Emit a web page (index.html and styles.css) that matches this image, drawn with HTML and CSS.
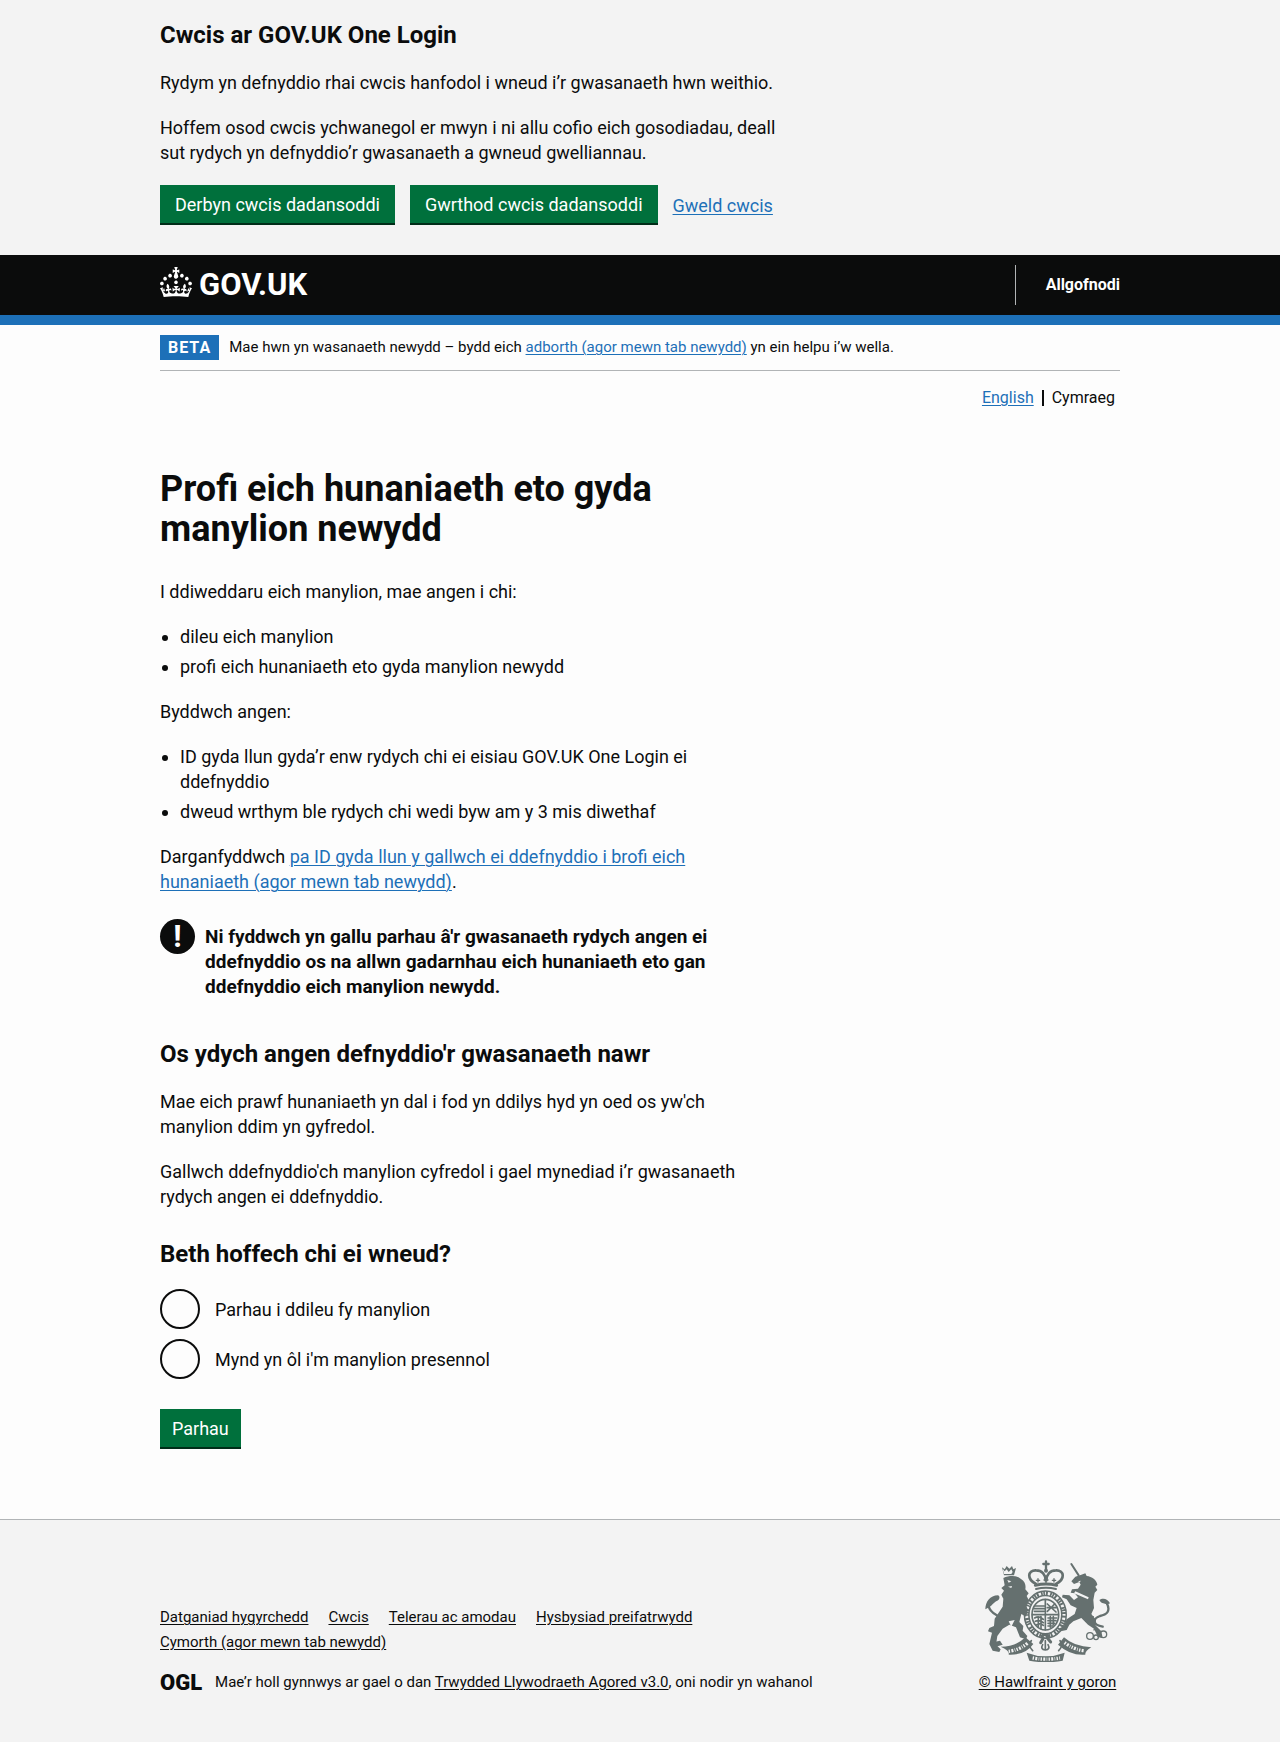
FILE: index.html
```html
<!DOCTYPE html>
<html lang="cy">
<head>
<meta charset="utf-8">
<meta name="viewport" content="width=device-width, initial-scale=1">
<title>Profi eich hunaniaeth eto gyda manylion newydd – GOV.UK One Login</title>
<link rel="stylesheet" href="styles.css">
</head>
<body>
<section class="cookies" aria-label="Cwcis ar GOV.UK One Login">
  <div class="container">
    <div class="cookies-message">
      <h2 class="heading-m">Cwcis ar GOV.UK One Login</h2>
      <p>Rydym yn defnyddio rhai cwcis hanfodol i wneud i’r gwasanaeth hwn weithio.</p>
      <p>Hoffem osod cwcis ychwanegol er mwyn i ni allu cofio eich gosodiadau, deall sut rydych yn defnyddio’r gwasanaeth a gwneud gwelliannau.</p>
    </div>
    <div class="button-group">
      <button type="button" class="button">Derbyn cwcis dadansoddi</button>
      <button type="button" class="button">Gwrthod cwcis dadansoddi</button>
      <a class="link" href="#cwcis">Gweld cwcis</a>
    </div>
  </div>
</section>

<header class="header">
  <div class="container header-inner">
    <a class="logo" href="#gov">
      <svg class="logo-crown" viewBox="0 0 32 30" aria-hidden="true"><path fill="currentColor" d="M22.6 10.4c-1 .4-2-.1-2.4-1-.4-.9.1-2 1-2.4.9-.4 2 .1 2.4 1s-.1 2-1 2.4m-5.9 6.7c-.9.4-2-.1-2.4-1-.4-.9.1-2 1-2.4.9-.4 2 .1 2.4 1s-.1 2-1 2.4m10.8-3.7c-1 .4-2-.1-2.4-1-.4-.9.1-2 1-2.4.9-.4 2 .1 2.4 1s0 2-1 2.4m3.3 4.8c-1 .4-2-.1-2.4-1-.4-.9.1-2 1-2.4.9-.4 2 .1 2.4 1s-.1 2-1 2.4M17 4.7l2.3 1.2V2.5l-2.3.7-.2-.2.9-3h-3.4l.9 3-.2.2c-.1.1-2.3-.7-2.3-.7v3.4L15 4.7c.1.1.1.2.2.2l-1.3 4c-.1.2-.1.4-.1.6 0 1.1.8 2 1.9 2.2h.7c1-.2 1.9-1.1 1.9-2.1 0-.2 0-.4-.1-.6l-1.3-4c-.1-.2 0-.2.1-.3m-7.6 5.7c.9.4 2-.1 2.4-1 .4-.9-.1-2-1-2.4-.9-.4-2 .1-2.4 1s0 2 1 2.4m-5 3c.9.4 2-.1 2.4-1 .4-.9-.1-2-1-2.4-.9-.4-2 .1-2.4 1s.1 2 1 2.4m-3.2 4.8c.9.4 2-.1 2.4-1 .4-.9-.1-2-1-2.4-.9-.4-2 .1-2.4 1s0 2 1 2.4m14.8 11c4.4 0 8.6.3 12.3.8 1.1-4.5 2.4-7 3.7-8.8l-2.5-.9c.2 1.3.3 1.9 0 2.7-.4-.4-.8-1.1-1.1-2.3l-1.2 4c.7-.5 1.3-.8 2-.9-1.1 2.5-2.6 3.1-3.5 3-1.1-.2-1.7-1.2-1.5-2.1.3-1.2 1.5-1.5 2.1-.1 1.1-2.3-.8-3-2-2.3 1.9-1.9 2.1-3.5.6-5.6-2.1 1.6-2.1 3.2-1.2 5.5-1.2-1.4-3.2-.6-2.5 1.6.9-1.4 2.1-.5 1.9.8-.2 1.1-1.7 2.1-3.5 1.9-2.7-.2-2.9-2.1-2.9-3.6.7-.1 1.9.5 2.9 1.9l.4-4.3c-1.1 1.1-2.1 1.4-3.2 1.4.4-1.2 2.1-3 2.1-3h-5.4s1.7 1.9 2.1 3c-1.1 0-2.1-.2-3.2-1.4l.4 4.3c1-1.4 2.2-2 2.9-1.9-.1 1.5-.2 3.4-2.9 3.6-1.9.2-3.4-.8-3.5-1.9-.2-1.3 1-2.2 1.9-.8.7-2.3-1.2-3-2.5-1.6.9-2.2.9-3.9-1.2-5.5-1.5 2-1.3 3.7.6 5.6-1.2-.7-3.1 0-2 2.3.6-1.4 1.8-1.1 2.1.1.2.9-.3 1.9-1.5 2.1-.9.2-2.4-.5-3.5-3 .6 0 1.2.3 2 .9l-1.2-4c-.3 1.1-.7 1.9-1.1 2.3-.3-.8-.2-1.4 0-2.7l-2.9.9C1.3 23 2.6 25.5 3.7 30c3.7-.5 7.9-.8 12.3-.8"/></svg>
      <span>GOV.UK</span>
    </a>
    <nav class="header-nav" aria-label="Cyfrif"><a href="#allgofnodi">Allgofnodi</a></nav>
  </div>
</header>

<div class="page">
  <div class="container">
    <div class="phase-banner">
      <strong class="tag">BETA</strong>
      <span>Mae hwn yn wasanaeth newydd – bydd eich <a class="link" href="#adborth">adborth (agor mewn tab newydd)</a> yn ein helpu i’w wella.</span>
    </div>
    <nav class="languages" aria-label="Dewis iaith">
      <a class="link" href="#en">English</a>
      <span class="language-current">Cymraeg</span>
    </nav>

    <main class="content">
      <h1>Profi eich hunaniaeth eto gyda manylion newydd</h1>
      <p>I ddiweddaru eich manylion, mae angen i chi:</p>
      <ul class="bullets">
        <li>dileu eich manylion</li>
        <li>profi eich hunaniaeth eto gyda manylion newydd</li>
      </ul>
      <p>Byddwch angen:</p>
      <ul class="bullets">
        <li>ID gyda llun gyda’r enw rydych chi ei eisiau GOV.UK One Login ei ddefnyddio</li>
        <li>dweud wrthym ble rydych chi wedi byw am y 3 mis diwethaf</li>
      </ul>
      <p>Darganfyddwch <a class="link" href="#id">pa ID gyda llun y gallwch ei ddefnyddio i brofi eich hunaniaeth (agor mewn tab newydd)</a>.</p>
      <div class="warning">
        <span class="warning-icon" aria-hidden="true">!</span>
        <strong>Ni fyddwch yn gallu parhau â'r gwasanaeth rydych angen ei ddefnyddio os na allwn gadarnhau eich hunaniaeth eto gan ddefnyddio eich manylion newydd.</strong>
      </div>
      <h2 class="heading-m">Os ydych angen defnyddio'r gwasanaeth nawr</h2>
      <p>Mae eich prawf hunaniaeth yn dal i fod yn ddilys hyd yn oed os yw'ch manylion ddim yn gyfredol.</p>
      <p>Gallwch ddefnyddio'ch manylion cyfredol i gael mynediad i’r gwasanaeth rydych angen ei ddefnyddio.</p>
      <form action="#">
        <fieldset>
          <legend class="heading-m">Beth hoffech chi ei wneud?</legend>
          <div class="radio">
            <input type="radio" name="dewis" id="dileu" value="dileu">
            <label for="dileu">Parhau i ddileu fy manylion</label>
          </div>
          <div class="radio">
            <input type="radio" name="dewis" id="presennol" value="presennol">
            <label for="presennol">Mynd yn ôl i'm manylion presennol</label>
          </div>
        </fieldset>
        <button class="button" type="submit">Parhau</button>
      </form>
    </main>
  </div>
</div>

<footer class="footer">
  <div class="container footer-inner">
    <div class="footer-meta">
      <ul class="footer-links">
        <li><a href="#hygyrchedd">Datganiad hygyrchedd</a></li>
        <li><a href="#cwcis">Cwcis</a></li>
        <li><a href="#telerau">Telerau ac amodau</a></li>
        <li><a href="#preifatrwydd">Hysbysiad preifatrwydd</a></li>
        <li><a href="#cymorth">Cymorth (agor mewn tab newydd)</a></li>
      </ul>
      <div class="licence">
        <span class="ogl">OGL</span>
        <span>Mae’r holl gynnwys ar gael o dan <a href="#trwydded">Trwydded Llywodraeth Agored v3.0</a>, oni nodir yn wahanol</span>
      </div>
    </div>
    <a class="copyright" href="#hawlfraint">
      <svg class="arms" viewBox="75 58 375 306" aria-hidden="true">
        <g fill="none" stroke="currentColor" stroke-linecap="round" stroke-linejoin="round">
          <!-- crown -->
          <path stroke-width="7" d="M258 62v26M250 70h16"/>
          <circle cx="258" cy="90" r="6" fill="currentColor" stroke="none"/>
          <path stroke-width="8" d="M228 130C200 116 202 88 228 89c18 0 28 12 29 30M288 130c28-14 26-42 0-41-18 0-28 12-29 30"/>
          <path stroke-width="4" d="M234 124v-10m-5 5h10M282 124v-10m-5 5h10M258 126v-14m-6 6h12"/>
          <path stroke-width="9" d="M226 134q32-8 64 0"/>
          <path stroke-width="6" d="M228 145q30-7 60 0"/>
          <!-- garter and shield -->
          <ellipse cx="256" cy="222" rx="56" ry="64" stroke-width="18"/>
          <ellipse cx="256" cy="222" rx="56" ry="64" stroke="#f3f3f3" stroke-width="9" stroke-dasharray="3 6 7 5 2 5" stroke-linecap="butt"/>
          <ellipse cx="256" cy="222" rx="40" ry="46" stroke-width="5"/>
          <path stroke-width="5" d="M256 177v90M218 222h76M224 196h28M222 204h30M223 212h29M262 190l26 24M262 212l22-22M262 201h26M224 232q14-8 26 4M226 242q12-6 24 4M230 252q12-6 20 2M264 232h26M264 240h24M264 248h20M264 256h14M271 228v32M280 228v24M235 230v30M243 228v36"/>
          <path stroke-width="9" d="M246 286q10-10 20 2M250 292l-8 14m20-14l10 12"/>
          <!-- stems below the garter -->
          <path stroke-width="5" d="M256 300v24M248 312q-8 14 8 16 16-2 8-16M214 300q-12 14 4 30M300 300q12 14-4 30"/>
          <!-- tails -->
          <path stroke-width="7" d="M104 268c34-10 26-34 4-46-26-14-30-38-6-48M440 186c14 28-2 36-20 40-22 8-24 26 8 32"/>
          <!-- unicorn horn and chain -->
          <path stroke-width="6" d="M334 70l22 34"/>
          <path stroke-width="4" d="M400 228q-10 12 0 20 8 8 2 20"/>
          <circle cx="390" cy="286" r="10" stroke-width="4"/>
          <circle cx="408" cy="290" r="7" stroke-width="4"/>
          <circle cx="430" cy="281" r="10" stroke-width="4"/>
        </g>
        <g fill="currentColor">
          <!-- lion -->
          <path d="M76 206c0-22 14-42 38-42 8 4 4 14-2 16-10 2-14 16-36 26z"/>
          <path d="M126 80l8 6 6-10 8 8 8-8 4 10 8-4-6 22h-30z"/>
          <path d="M130 112c18-8 40-8 52 2 14 8 16 20 14 32l10 12-6 8 6 12-8 16 6 14-6 20-14-8-6 24 12 12-2 14 14 16-4 10-18-6-12-30-20-8-20 12-16 22-4 26 14 14-4 8-20-4-10-20 8-34-12-4 4-10 14-6 2-22 24-36 2-24-6-12 8-12-8-8 10-8z"/>
          <path fill="#f3f3f3" d="M128 84l6 8 6-6 6 8 8-8 4 8-4 6h-22zM142 118l12 4-8 4zM144 138l12-2-2 6zM146 242l18-4-10 20z"/>
          <!-- unicorn -->
          <path d="M346 108l18-6 12-4 4 8c16 2 30 12 32 26l-6 6 6 10-8 8-4 22 2 24-8 18 14 18-2 16 18 18 4 20-14-2-12-26-18-12-20-20-24 10-12 10-8 16-18 4-6-8 16-8 8-20 24-16 6-18-18-8-12-18-14-6 2-8 20 2 14 14 12-8-10-12-12-2 4-10 18-2 8-12-4-8-16 6-8-8z"/>
          <path d="M418 178c10-8 26-4 32 10l-10 4c-6-6-14 0-22-14z"/>
          <path fill="#f3f3f3" d="M346 152l40 18-2 6-42-18zM354 122l8-2-2 5z"/>
          <!-- motto ribbons -->
          <path d="M122 318q46 0 74-28l24 20q-24 34-74 32 4-12-24-24zM200 336q56 22 114 0l-6 24q-50 10-100 0zM312 290q30 28 82 30-20 12-18 22-44 4-82-30z"/>
          <path d="M92 306l28-6 8 12-20 6z"/>
        </g>
        <g fill="none" stroke="#f3f3f3" stroke-width="10" stroke-dasharray="4 4 6 4 2 4">
          <path d="M146 332q34-4 58-26"/>
          <path d="M218 352q40 7 82 0"/>
          <path d="M314 306q30 22 60 24"/>
        </g>
      </svg>
      <span>© Hawlfraint y goron</span>
    </a>
  </div>
</footer>
</body>
</html>
```
FILE: styles.css
```css
*,
*::before,
*::after {
  box-sizing: border-box;
}

body {
  margin: 0;
  background: #f3f3f3;
  color: #0b0c0c;
  font: 18px/25px Roboto, "Liberation Sans", sans-serif;
}

h1,
h2,
p,
ul,
fieldset {
  margin: 0;
  padding: 0;
}

a {
  color: inherit;
  text-decoration-thickness: 1px;
  text-underline-offset: 2px;
}

.link {
  color: #1d70b8;
}

.container {
  max-width: 960px;
  margin: 0 auto;
}

p,
.bullets {
  margin-bottom: 20px;
}

.heading-m {
  font-size: 24px;
  line-height: 30px;
  font-weight: 700;
  margin-bottom: 20px;
}

.button {
  height: 40px;
  padding: 0 12px 2px;
  border: 0;
  border-radius: 0;
  background: #00703c;
  box-shadow: inset 0 -2px 0 #002d18;
  color: #fff;
  font: inherit;
  cursor: pointer;
}

/* Cookie banner */
.cookies {
  padding: 20px 0 30px;
}

.cookies-message {
  max-width: 630px;
}

.button-group {
  display: flex;
  flex-wrap: wrap;
  align-items: center;
  gap: 15px;
}

.button-group .button {
  padding: 0 15px 2px;
}

/* Header */
.header {
  background: #0b0c0c;
  border-bottom: 10px solid #1d70b8;
  color: #fff;
}

.header-inner {
  display: flex;
  align-items: center;
  justify-content: space-between;
  min-height: 60px;
}

.logo {
  display: flex;
  align-items: center;
  gap: 7px;
  font-size: 31px;
  line-height: 30px;
  font-weight: 700;
  text-decoration: none;
}

.logo-crown {
  width: 32px;
  height: 30px;
  margin-bottom: 6px;
}

.header-nav {
  border-left: 1px solid #b1b4b6;
  padding-left: 30px;
  font-size: 16px;
  line-height: 40px;
  font-weight: 700;
}

.header-nav a {
  text-decoration: none;
}

/* Phase banner and language switch */
.page {
  padding: 10px 0 70px;
  background: #fdfdfd;
  border-bottom: 1px solid #b1b4b6;
}

.phase-banner {
  display: flex;
  align-items: center;
  gap: 10px;
  padding-bottom: 10px;
  border-bottom: 1px solid #b1b4b6;
  font-size: 15px;
}

.tag {
  padding: 0 8px;
  background: #1d70b8;
  color: #fff;
  font-size: 16px;
  letter-spacing: 1px;
}

.languages {
  display: flex;
  justify-content: flex-end;
  gap: 8px;
  padding: 17px 5px 0 0;
  font-size: 16px;
  line-height: 20px;
}

.language-current {
  border-left: 2px solid #0b0c0c;
  padding-left: 8px;
  line-height: 16px;
  align-self: center;
}

/* Main content */
.content {
  max-width: 610px;
  padding-top: 61px;
}

h1 {
  font-size: 36px;
  line-height: 40px;
  margin-bottom: 30px;
}

.bullets {
  padding-left: 20px;
}

.bullets li + li {
  margin-top: 5px;
}

.warning {
  display: flex;
  gap: 10px;
  margin: 25px 0 40px;
}

.warning strong {
  padding-top: 5px;
  font-size: 19px;
}

.warning-icon {
  flex: none;
  width: 35px;
  height: 35px;
  border-radius: 50%;
  background: #0b0c0c;
  color: #fff;
  font-size: 31px;
  line-height: 35px;
  font-weight: 700;
  text-align: center;
}

form {
  padding-top: 10px;
}

fieldset {
  border: 0;
  margin-bottom: 30px;
}

legend {
  padding: 0;
}

.radio {
  display: flex;
  align-items: center;
  gap: 15px;
}

.radio + .radio {
  margin-top: 10px;
}

.radio input {
  appearance: none;
  width: 40px;
  height: 40px;
  margin: 0;
  border: 2px solid #0b0c0c;
  border-radius: 50%;
}

.radio input:checked {
  background: radial-gradient(#0b0c0c 10px, transparent 11px);
}

/* Footer */
.footer {
  padding: 40px 0 47px;
  font-size: 15px;
}

.footer-inner {
  display: flex;
  align-items: flex-end;
  justify-content: space-between;
}

.footer-meta {
  max-width: 720px;
}

.footer-links {
  display: flex;
  flex-wrap: wrap;
  column-gap: 20px;
  margin-bottom: 15px;
  list-style: none;
}

.licence {
  display: flex;
  align-items: center;
  gap: 13px;
}

.ogl {
  font-size: 22px;
  font-weight: 900;
}

.copyright {
  display: flex;
  flex-direction: column;
  align-items: center;
  gap: 8px;
  min-width: 145px;
}

.arms {
  width: 125px;
  height: 102px;
  color: #65706f;
}
```
